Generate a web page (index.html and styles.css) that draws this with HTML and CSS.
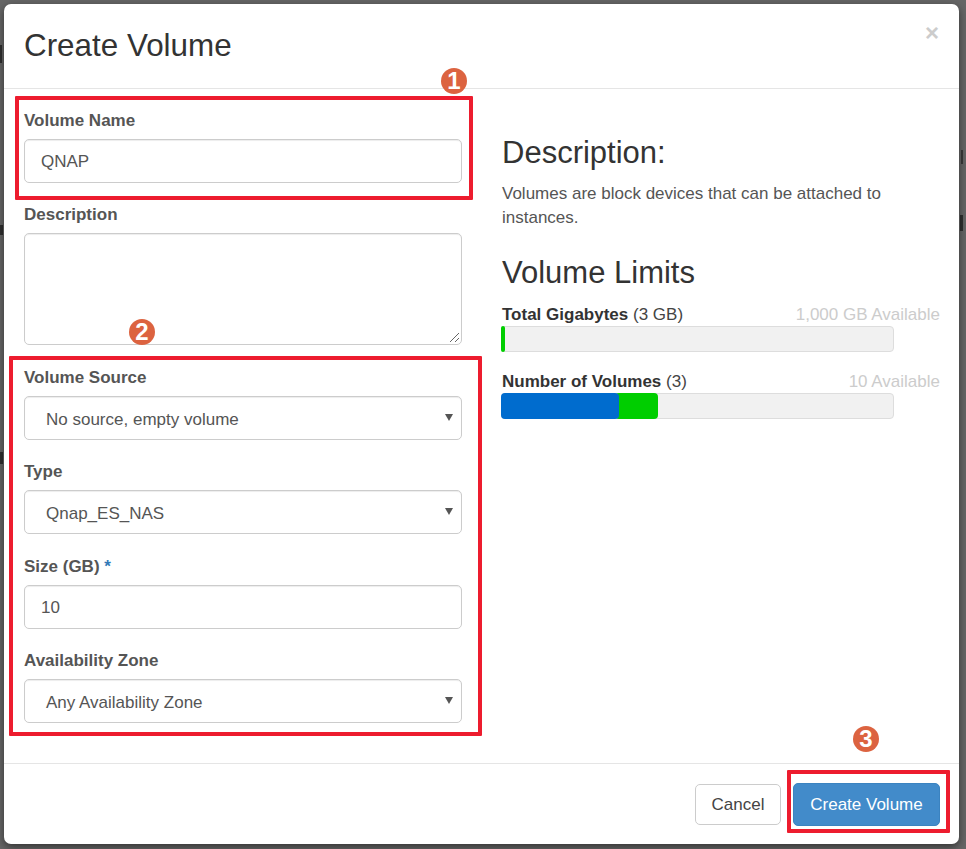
FILE: index.html
```html
<!DOCTYPE html>
<html lang="en">
<head>
<meta charset="utf-8">
<title>Create Volume</title>
<link rel="stylesheet" href="styles.css">
</head>
<body>
<div class="backdrop">
  <i class="frag frag-a"></i>
  <i class="frag frag-b"></i>
  <i class="frag frag-c"></i>
  <i class="frag frag-d"></i>
  <i class="frag frag-e"></i>
  <div class="modal">
    <header class="modal-header">
      <h2 class="modal-title">Create Volume</h2>
      <span class="close">×</span>
    </header>
    <div class="modal-body">
      <form class="form-col">
        <div class="group group-name">
          <label class="label">Volume Name</label>
          <div class="control">QNAP</div>
        </div>
        <div class="group group-desc">
          <label class="label">Description</label>
          <div class="control textarea">
            <svg class="grip" width="11" height="11" viewBox="0 0 11 11"><path d="M1 10 10 1M6 10l4-4" stroke="#666" stroke-width="1" fill="none"/></svg>
          </div>
        </div>
        <div class="group group-source">
          <label class="label">Volume Source</label>
          <div class="control select">No source, empty volume<span class="caret"></span></div>
        </div>
        <div class="group">
          <label class="label">Type</label>
          <div class="control select">Qnap_ES_NAS<span class="caret"></span></div>
        </div>
        <div class="group">
          <label class="label">Size (GB) <span class="req">*</span></label>
          <div class="control">10</div>
        </div>
        <div class="group">
          <label class="label">Availability Zone</label>
          <div class="control select">Any Availability Zone<span class="caret"></span></div>
        </div>
      </form>
      <aside class="info-col">
        <h3 class="info-title first">Description:</h3>
        <p class="info-text">Volumes are block devices that can be attached to instances.</p>
        <h3 class="info-title">Volume Limits</h3>
        <div class="limit">
          <div class="limit-head"><span><b>Total Gigabytes</b> (3 GB)</span><span class="avail">1,000 GB Available</span></div>
          <div class="bar"><div class="fill green" style="width:4px"></div></div>
        </div>
        <div class="limit">
          <div class="limit-head"><span><b>Number of Volumes</b> (3)</span><span class="avail">10 Available</span></div>
          <div class="bar"><div class="fill blue" style="width:118px"></div><div class="fill green second" style="width:43px"></div></div>
        </div>
      </aside>
    </div>
    <footer class="modal-footer">
      <button class="btn cancel" type="button">Cancel</button>
      <button class="btn primary" type="button">Create Volume</button>
    </footer>
    <div class="mark mark-1"></div>
    <div class="mark mark-2"></div>
    <div class="mark mark-3"></div>
    <span class="num num-1">1</span>
    <span class="num num-2">2</span>
    <span class="num num-3">3</span>
  </div>
</div>
</body>
</html>
```
FILE: styles.css
```css
* { box-sizing: border-box; }
html, body { margin: 0; padding: 0; }
body {
  width: 966px;
  height: 849px;
  overflow: hidden;
  font-family: "Liberation Sans", Arial, sans-serif;
  color: #555;
}
.backdrop {
  position: relative;
  height: 849px;
  padding: 4px 7px 5px 4px;
  background: #666;
}
.frag { position: absolute; background: #2f2f2f; }
.frag-a { left: 0; top: 45px; width: 2px; height: 18px; }
.frag-b { left: 0; top: 225px; width: 3px; height: 10px; }
.frag-c { left: 0; top: 452px; width: 3px; height: 12px; }
.frag-d { right: 3px; top: 150px; width: 2px; height: 14px; background: #3a3a3a; }
.frag-e { right: 3px; top: 215px; width: 3px; height: 16px; }
.modal {
  position: relative;
  height: 840px;
  background: #fff;
  border-radius: 7px;
  display: flex;
  flex-direction: column;
  box-shadow: 0 3px 9px rgba(0,0,0,.5);
}
.modal-header {
  height: 85px;
  flex: none;
  border-bottom: 1px solid #e5e5e5;
  padding: 21px 20px 0;
  display: flex;
  justify-content: space-between;
}
.modal-title {
  margin: 0;
  font-size: 31.4px;
  font-weight: 400;
  line-height: 42px;
  color: #333;
}
.close {
  font-size: 24px;
  font-weight: 700;
  line-height: 16px;
  color: #ccc;
  margin: 0;
}
.modal-body {
  flex: 1;
  display: flex;
  padding: 0 19px 0 20px;
}
.form-col { width: 438px; flex: none; padding-top: 20px; }
.group { margin-bottom: 20.4px; }
.group-name { margin-bottom: 20px; }
.group-source { margin-top: 21px; }
.group-desc { margin-bottom: 0; }
.label {
  display: block;
  font-size: 17px;
  font-weight: 700;
  line-height: 24px;
  margin-bottom: 8px;
  height: 22px;
  color: #555;
}
.req { color: #337ab7; }
.control {
  position: relative;
  height: 44px;
  border: 1px solid #ccc;
  border-radius: 5px;
  padding: 0 16px;
  font-size: 17px;
  line-height: 44px;
  color: #555;
  background: #fff;
  box-shadow: inset 0 1px 1px rgba(0,0,0,.075);
}
.textarea { height: 112px; }
.grip { position: absolute; right: 1px; bottom: 1px; }
.select { padding-left: 21px; line-height: 45px; }
.caret {
  position: absolute;
  right: 8px;
  top: 17px;
  width: 0;
  height: 0;
  border-left: 4px solid transparent;
  border-right: 4px solid transparent;
  border-top: 7px solid #555;
}
.info-col { width: 438px; margin-left: 40px; padding-top: 44px; }
.info-title {
  margin: 0;
  font-size: 31px;
  font-weight: 400;
  line-height: 40px;
  color: #333;
}
.info-text {
  margin: 9px 0 23px;
  font-size: 17px;
  line-height: 24px;
  color: #555;
}
.limit { margin-bottom: 19px; }
.limit:first-of-type { margin-top: 11px; }
.limit-head {
  display: flex;
  justify-content: space-between;
  font-size: 17px;
  line-height: 22px;
  height: 22px;
  color: #444;
}
.limit-head b { color: #333; }
.avail { color: #ccc; }
.bar {
  display: flex;
  width: 393px;
  height: 26px;
  border: 1px solid #ddd;
  border-radius: 4px;
  background: #f1f1f1;
  margin-left: -1px;
}
.fill { margin: -1px 0; border-radius: 4px; }
.fill:first-child { margin-left: -1px; }
.blue { background: #006cce; position: relative; z-index: 1; }
.green { background: #00ce00; }
.second { margin-left: -4px; }
.modal-footer {
  height: 81px;
  flex: none;
  border-top: 1px solid #e5e5e5;
  padding: 19px 19px 0 0;
  display: flex;
  justify-content: flex-end;
  align-items: flex-start;
  gap: 12px;
}
.btn {
  font: 17px/1 "Liberation Sans", Arial, sans-serif;
  border-radius: 5px;
  border: 1px solid #ccc;
  background: #fff;
  color: #444;
}
.cancel { width: 86px; height: 41px; margin-top: 1px; }
.primary {
  width: 147px;
  height: 43px;
  background: #428bca;
  border-color: #3b83c0;
  color: #fff;
}
.mark {
  position: absolute;
  border: 4px solid #ed1c2e;
  border-radius: 1px;
}
.mark-1 { left: 11px; top: 92px; width: 458px; height: 104px; }
.mark-2 { left: 5px; top: 352px; width: 473px; height: 380px; }
.mark-3 { left: 783px; top: 766px; width: 163px; height: 63px; }
.num {
  position: absolute;
  width: 26px;
  height: 26px;
  border-radius: 50%;
  background: #dc6340;
  color: #fff;
  font-size: 24px;
  font-weight: 700;
  line-height: 26px;
  text-align: center;
}
.num-1 { left: 437px; top: 64px; }
.num-2 { left: 125px; top: 315px; }
.num-3 { left: 849px; top: 722px; }
```
